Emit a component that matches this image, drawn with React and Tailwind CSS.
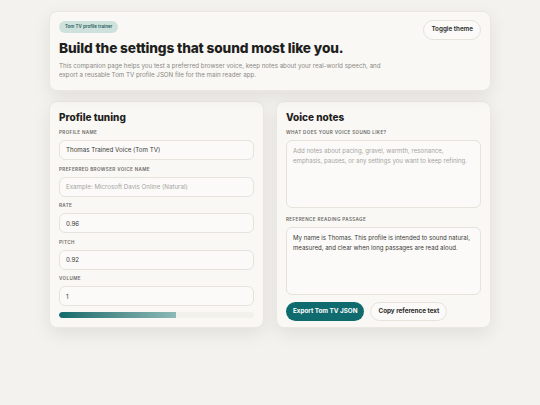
import React from 'react';

const fields = [
  { label: 'Profile name', value: 'Thomas Trained Voice (Tom TV)' },
  { label: 'Preferred browser voice name', placeholder: 'Example: Microsoft Davis Online (Natural)' },
  { label: 'Rate', value: '0.96' },
  { label: 'Pitch', value: '0.92' },
  { label: 'Volume', value: '1' },
];

function Label({ children }) {
  return (
    <div className="text-[4.6px] font-semibold uppercase tracking-[0.08em] text-[#6b6a66] leading-none">{children}</div>
  );
}

export default function App() {
  return (
    <div
      className="w-[540px] h-[405px] bg-[#f4f2ee] pt-[11px] px-[49px] text-[#1f1f1d]"
      style={{ fontFamily: 'Inter, "Noto Sans", sans-serif' }}
    >
      {/* header */}
      <div className="bg-[#f9f8f5] rounded-[8px] border border-[#ebe8e2] shadow-[0_6px_18px_rgba(0,0,0,0.08)] h-[80px] px-[9px] pt-[9px] relative flex flex-col items-start">
        <span className="bg-[#cfe1dd] text-[#1e5f5b] rounded-full px-[6px] h-[12px] flex items-center text-[4.5px] font-semibold leading-none">
          Tom TV profile trainer
        </span>
        <button className="absolute right-[9px] top-[8px] h-[20px] px-[7px] rounded-full border border-[#e6e3dd] bg-[#fbfaf8] text-[6.3px] font-semibold text-[#2a2a28]">
          Toggle theme
        </button>
        <h1 className="mt-[7px] text-[13.7px] leading-[16px] font-extrabold tracking-[-0.01em]">
          Build the settings that sound most like you.
        </h1>
        <p className="mt-[6px] text-[6.2px] leading-[8.5px] text-[#8a8883] w-[332px]">
          This companion page helps you test a preferred browser voice, keep notes about your real-world speech, and export a reusable Tom TV profile JSON file for the main reader app.
        </p>
      </div>

      <div className="grid grid-cols-2 gap-[12px] mt-[10px]">
        {/* left */}
        <div className="bg-[#f9f8f5] rounded-[8px] border border-[#ebe8e2] shadow-[0_6px_18px_rgba(0,0,0,0.08)] h-[227px] px-[9px] pt-[9px]">
          <h2 className="text-[10px] leading-[13px] font-extrabold">Profile tuning</h2>
          <div className="mt-[7px] flex flex-col gap-[7.5px]">
            {fields.map(f => (
              <div key={f.label} className="flex flex-col gap-[4.5px]">
                <Label>{f.label}</Label>
                <div className="h-[20px] rounded-[6px] border border-[#e6e3dd] bg-[#fbfaf8] px-[6px] flex items-center text-[6.2px]">
                  {f.value ? (
                    <span className="text-[#3a3936]">{f.value}</span>
                  ) : (
                    <span className="text-[#a6a49f]">{f.placeholder}</span>
                  )}
                </div>
              </div>
            ))}
          </div>
          <div className="mt-[6px] h-[6px] rounded-full bg-[#f3f1ec] overflow-hidden">
            <div className="h-full w-[60%] rounded-l-full bg-gradient-to-r from-[#0f6b6b] to-[#8cb9b6]" />
          </div>
        </div>

        {/* right */}
        <div className="bg-[#f9f8f5] rounded-[8px] border border-[#ebe8e2] shadow-[0_6px_18px_rgba(0,0,0,0.08)] h-[227px] px-[9px] pt-[9px]">
          <h2 className="text-[10px] leading-[13px] font-extrabold">Voice notes</h2>
          <div className="mt-[7px]">
            <Label>What does your voice sound like?</Label>
            <div className="mt-[4.5px] h-[68px] rounded-[6px] border border-[#e6e3dd] bg-[#fbfaf8] px-[6px] py-[5px] text-[6.1px] leading-[10px] text-[#a6a49f]">
              Add notes about pacing, gravel, warmth, resonance, emphasis, pauses, or any settings you want to keep refining.
            </div>
          </div>
          <div className="mt-[10px]">
            <Label>Reference reading passage</Label>
            <div className="mt-[4.5px] h-[68px] rounded-[6px] border border-[#e6e3dd] bg-[#fbfaf8] px-[6px] py-[5px] text-[6.1px] leading-[10px] text-[#3a3936]">
              My name is Thomas. This profile is intended to sound natural, measured, and clear when long passages are read aloud.
            </div>
          </div>
          <div className="mt-[7px] flex gap-[6px]">
            <button className="h-[19px] px-[7px] rounded-full bg-[#0f6b6e] text-white text-[6.3px] font-bold">
              Export Tom TV JSON
            </button>
            <button className="h-[19px] px-[7px] rounded-full border border-[#e6e3dd] bg-[#fbfaf8] text-[6.3px] font-bold text-[#2a2a28]">
              Copy reference text
            </button>
          </div>
        </div>
      </div>
    </div>
  );
}
